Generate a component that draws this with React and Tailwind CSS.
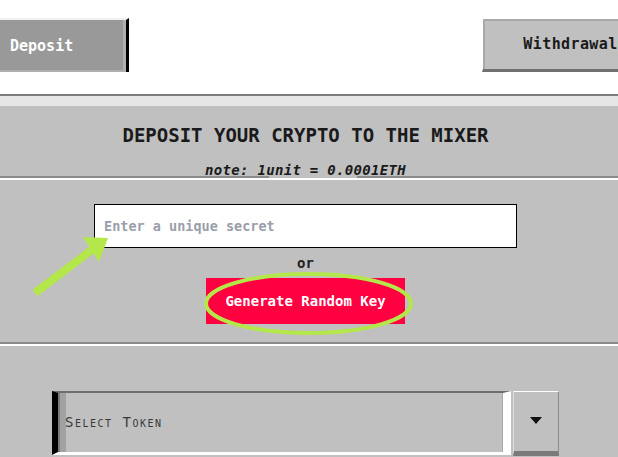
import React from "react";

export default function App() {
  return (
    <div className="relative h-[457px] w-[618px] overflow-hidden bg-white font-['DejaVu_Sans_Mono',monospace]">
      {/* top tabs */}
      <div className="flex h-[94px] items-start justify-between pt-[18px]">
        <button className="flex h-[54px] w-[129px] items-center border-t-2 border-r-[3px] border-t-[#f0f0f0] border-r-black bg-[#999999] pl-[10px] text-[15px] font-bold text-white shadow-[inset_-3px_-2px_0_#b0b0b0]">
          Deposit
        </button>
        <button className="mr-[-40px] flex h-[54px] w-[176px] shrink-0 items-center justify-center border-t border-l border-white border-b-[3px] border-b-[#707070] bg-[#c0c0c0] text-[15px] font-bold tracking-[0.4px] text-[#1a1a1a] shadow-[inset_2px_2px_0_#a9a9a9]">
          Withdrawal
        </button>
      </div>

      <div className="h-[12px] border-t-2 border-[#7c7c7c] bg-[#e6e6e6]" />

      {/* header */}
      <div className="h-[70px] bg-[#c0c0c0]">
        <div className="flex w-[611px] flex-col items-center pt-[20px] text-[#1a1a1a]">
          <h1 className="text-[19px] leading-[19px] font-bold">
            DEPOSIT YOUR CRYPTO TO THE MIXER
          </h1>
          <p className="mt-[18px] text-[14px] leading-[14px] font-bold italic tracking-[0.3px]">
            note: 1unit = 0.0001ETH
          </p>
        </div>
      </div>
      <div className="relative h-[4px] border-t-2 border-b-2 border-t-[#8a8a8a] border-b-white bg-[#c0c0c0]">
        <span className="absolute top-[-2px] left-[269px] h-[2px] w-[88px] bg-[#c0c0c0]" />
      </div>

      {/* secret */}
      <div className="h-[162px] bg-[#c0c0c0]">
        <div className="flex w-[611px] flex-col items-center pt-[24px]">
          <input
            type="text"
            placeholder="Enter a unique secret"
            className="h-[44px] w-[423px] border border-black bg-white pl-[9px] text-[13.5px] font-bold text-[#333] placeholder-[#9a9eaa] outline-none"
          />
          <span className="mt-[8px] text-[14px] leading-[14px] font-bold text-[#222]">
            or
          </span>
          <button className="mt-[8px] h-[46px] w-[199px] bg-[#ff0040] text-[14px] font-bold text-white">
            Generate Random Key
          </button>
        </div>
      </div>
      <div className="h-[4px] border-t-2 border-b-2 border-t-[#8a8a8a] border-b-white bg-[#c0c0c0]" />

      {/* token */}
      <div className="h-[111px] bg-[#c0c0c0] pt-[45px]">
        <div className="flex gap-[2px] pl-[52px]">
          <div className="flex h-[64px] w-[459px] items-center border-t-2 border-b-[3px] border-l-[6px] border-r-[8px] border-t-[#6e6e6e] border-b-white border-l-black border-r-white pl-[7px] text-[14px] tracking-[1.5px] text-[#3a3a3a] shadow-[inset_2px_0_0_#7a7a7a,inset_8px_0_0_#a2a2a2,inset_-1px_0_0_#a8a8a8] [font-variant:small-caps]">
            Select Token
          </div>
          <div className="flex h-[65px] w-[46px] items-center justify-center border-t border-l border-r border-b-[5px] border-t-white border-l-[#dcdcdc] border-r-[#8a8a8a] border-b-[#7a7a7a] pb-[2px]">
            <svg width="12" height="7" viewBox="0 0 12 7">
              <polygon points="0,0 12,0 6,7" fill="#111" />
            </svg>
          </div>
        </div>
      </div>

      {/* annotations */}
      <svg
        className="pointer-events-none absolute top-0 left-0"
        width="618"
        height="457"
        viewBox="0 0 618 457"
      >
        <line x1="35" y1="293" x2="93" y2="249" stroke="#b4e74a" strokeWidth="8" />
        <polygon points="83,237 108,238 99,262" fill="#b4e74a" />
        <ellipse cx="308.5" cy="303.5" rx="102.5" ry="29.5" fill="none" stroke="#b4e74a" strokeWidth="4" />
      </svg>
    </div>
  );
}
